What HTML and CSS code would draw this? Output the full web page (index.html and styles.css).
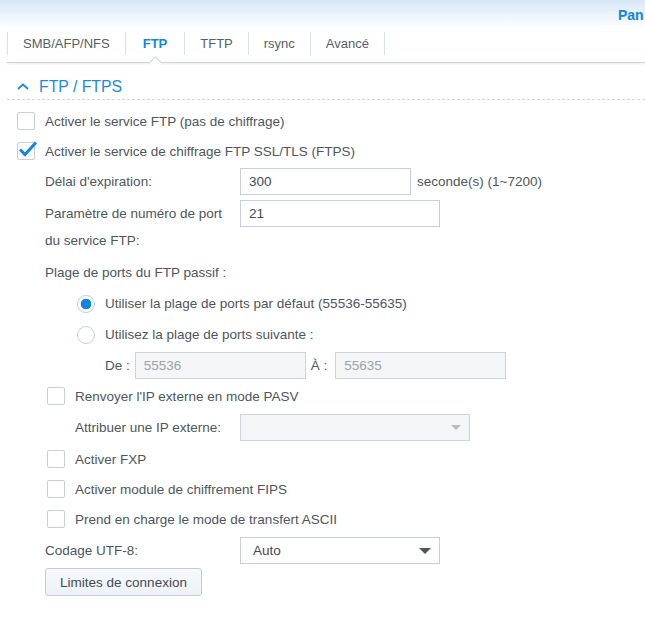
FILE: index.html
```html
<!DOCTYPE html>
<html lang="fr">
<head>
  <meta charset="UTF-8" />
  <title>Services de fichiers - FTP</title>
  <link rel="stylesheet" href="styles.css">
</head>
<body>
  <div class="topbar"><span class="app-title">Pan</span></div>

  <nav class="tabs">
    <span class="tab">SMB/AFP/NFS</span>
    <span class="tab active">FTP</span>
    <span class="tab">TFTP</span>
    <span class="tab">rsync</span>
    <span class="tab">Avancé</span>
  </nav>

  <section class="panel">
    <h3 class="panel-title">
      <svg class="chevron" width="12" height="7" viewBox="0 0 12 7"><polyline points="1,6 6,1.5 11,6" fill="none" stroke="#1a8ae2" stroke-width="1.8"/></svg>
      FTP / FTPS
    </h3>

    <div class="form">
      <div class="row">
        <span class="checkbox"></span>
        <span>Activer le service FTP (pas de chiffrage)</span>
      </div>
      <div class="row">
        <span class="checkbox checked">
          <svg width="22" height="22" viewBox="0 0 22 22"><polyline points="3,10.5 8,15.5 19,3.5" fill="none" stroke="#0f86df" stroke-width="3" stroke-linejoin="miter"/></svg>
        </span>
        <span>Activer le service de chiffrage FTP SSL/TLS (FTPS)</span>
      </div>

      <div class="row row-input indent-label">
        <span class="field-label">Délai d'expiration:</span>
        <input class="text-field w-timeout" type="text" value="300">
        <span class="unit">seconde(s) (1~7200)</span>
      </div>
      <div class="row-port indent-label">
        <span class="field-label">Paramètre de numéro de port<br>du service FTP:</span>
        <input class="text-field w-port" type="text" value="21">
      </div>

      <div class="row row-input row-gap indent-label">Plage de ports du FTP passif :</div>
      <div class="row row-input indent-radio">
        <span class="radio checked"></span>
        <span>Utiliser la plage de ports par défaut (55536-55635)</span>
      </div>
      <div class="row row-input indent-radio">
        <span class="radio"></span>
        <span>Utilisez la plage de ports suivante :</span>
      </div>
      <div class="row row-input indent-range">
        <span class="range-label">De :</span>
        <input class="text-field w-range" type="text" value="55536" disabled>
        <span class="range-label range-to">À :</span>
        <input class="text-field w-range" type="text" value="55635" disabled>
      </div>

      <div class="row indent-sub">
        <span class="checkbox"></span>
        <span>Renvoyer l'IP externe en mode PASV</span>
      </div>
      <div class="row row-select indent-sublabel">
        <span class="field-label sub">Attribuer une IP externe:</span>
        <div class="select disabled w-ip"><span class="select-value"></span><span class="caret"></span></div>
      </div>
      <div class="row indent-sub">
        <span class="checkbox"></span>
        <span>Activer FXP</span>
      </div>
      <div class="row indent-sub">
        <span class="checkbox"></span>
        <span>Activer module de chiffrement FIPS</span>
      </div>
      <div class="row indent-sub">
        <span class="checkbox"></span>
        <span>Prend en charge le mode de transfert ASCII</span>
      </div>

      <div class="row row-select indent-label">
        <span class="field-label">Codage UTF-8:</span>
        <div class="select w-port"><span class="select-value">Auto</span><span class="caret"></span></div>
      </div>
      <div class="actions indent-label">
        <button class="btn">Limites de connexion</button>
      </div>
    </div>
  </section>
</body>
</html>
```

FILE: styles.css
```css
* {
  box-sizing: border-box;
  margin: 0;
  padding: 0;
}

body {
  font-family: "Liberation Sans", Arial, sans-serif;
  font-size: 13.5px;
  color: #4d5660;
  background: #ffffff;
  overflow: hidden;
}

.topbar {
  height: 32px;
  line-height: 30px;
  padding-left: 618px;
  white-space: nowrap;
  overflow: hidden;
  background: linear-gradient(#d8e8f9, #ffffff 92%);
}

.app-title {
  color: #0f86df;
  font-weight: bold;
  font-size: 14px;
}

/* tabs */
.tabs {
  display: flex;
  margin-left: 7px;
  padding-bottom: 7px;
  border-bottom: 1px solid #cdd4da;
  box-shadow: 0 1px 2px rgba(0, 0, 0, 0.08);
}

.tab {
  position: relative;
  height: 23px;
  line-height: 23px;
  padding: 0 15px;
  border-left: 1px solid #dce2e7;
  font-size: 13px;
  color: #555f69;
}

.tab:last-child { border-right: 1px solid #dce2e7; }

.tab.active {
  padding: 0 17px;
  color: #0f86df;
  font-weight: bold;
}

.tab.active::after {
  content: "";
  position: absolute;
  left: 50%;
  top: calc(100% + 3px);
  width: 8px;
  height: 8px;
  margin-left: -4px;
  background: #ffffff;
  border-top: 1px solid #cdd4da;
  border-left: 1px solid #cdd4da;
  transform: rotate(45deg);
}

/* section */
.panel {
  margin: 11px 0 0 7px;
}

.panel-title {
  display: flex;
  align-items: center;
  height: 26px;
  padding-left: 10px;
  border-bottom: 1px dashed #d3d9de;
  color: #1a8ae2;
  font-size: 15.8px;
  font-weight: normal;
}

.chevron {
  margin-right: 10px;
}

.form {
  padding: 6px 0 0 10px;
}

.row {
  display: flex;
  align-items: center;
  height: 30px;
}

.row-input { height: 31px; }
.row-select { height: 33px; }
.row-gap { margin-top: 3px; }

.row-port {
  display: flex;
  align-items: flex-start;
  margin-top: 3px;
  line-height: 27px;
}

.indent-label { padding-left: 28px; }
.indent-sub { padding-left: 30px; }
.indent-sublabel { padding-left: 58px; }
.indent-radio { padding-left: 60px; }
.indent-range { padding-left: 88px; }

.field-label {
  flex: none;
  width: 195px;
}

.field-label.sub { width: 165px; }

.unit { margin-left: 6px; }

/* controls */
.checkbox {
  flex: none;
  position: relative;
  width: 18px;
  height: 18px;
  margin-right: 10px;
  border: 1px solid #c6d0d9;
  border-radius: 2px;
  background: #ffffff;
}

.checkbox svg {
  position: absolute;
  left: -1px;
  top: -4px;
}

.radio {
  flex: none;
  width: 18px;
  height: 18px;
  margin-right: 10px;
  border: 1px solid #c6d0d9;
  border-radius: 50%;
  background: #ffffff;
}

.radio.checked {
  border-color: #b7cde2;
  background: radial-gradient(circle, #0f86df 0 5px, #ffffff 5.6px);
}

.text-field {
  height: 27px;
  padding: 0 8px;
  border: 1px solid #c6d0da;
  border-radius: 0;
  background: #ffffff;
  font-family: inherit;
  font-size: 13.5px;
  color: #414b55;
  outline: none;
}

.text-field:disabled {
  background: #f3f5f7;
  border-color: #cdd5dc;
  color: #9aa3ac;
}

.w-timeout { width: 171px; }
.w-port { width: 200px; }
.w-range { width: 171px; }
.w-ip { width: 230px; }

.range-label { margin-right: 5px; }
.range-to { margin-left: 5px; margin-right: 8px; }

.select {
  display: flex;
  align-items: center;
  height: 27px;
  padding: 0 8px 0 12px;
  border: 1px solid #c6d0da;
  background: #ffffff;
  color: #414b55;
}

.select.disabled {
  background: #f3f5f7;
  border-color: #cdd5dc;
}

.select-value { flex: 1; }

.caret {
  width: 0;
  height: 0;
  border-left: 6px solid transparent;
  border-right: 6px solid transparent;
  border-top: 6px solid #4a5561;
}

.select.disabled .caret {
  border-left-width: 5px;
  border-right-width: 5px;
  border-top: 5px solid #b3bdc7;
}

.actions {
  margin-top: 1px;
}

.btn {
  width: 157px;
  height: 28px;
  border: 1px solid #c3ccd6;
  border-radius: 3px;
  background: linear-gradient(#f7f9fc, #edf2f7);
  font-family: inherit;
  font-size: 13.5px;
  color: #414b55;
  cursor: pointer;
}
```
